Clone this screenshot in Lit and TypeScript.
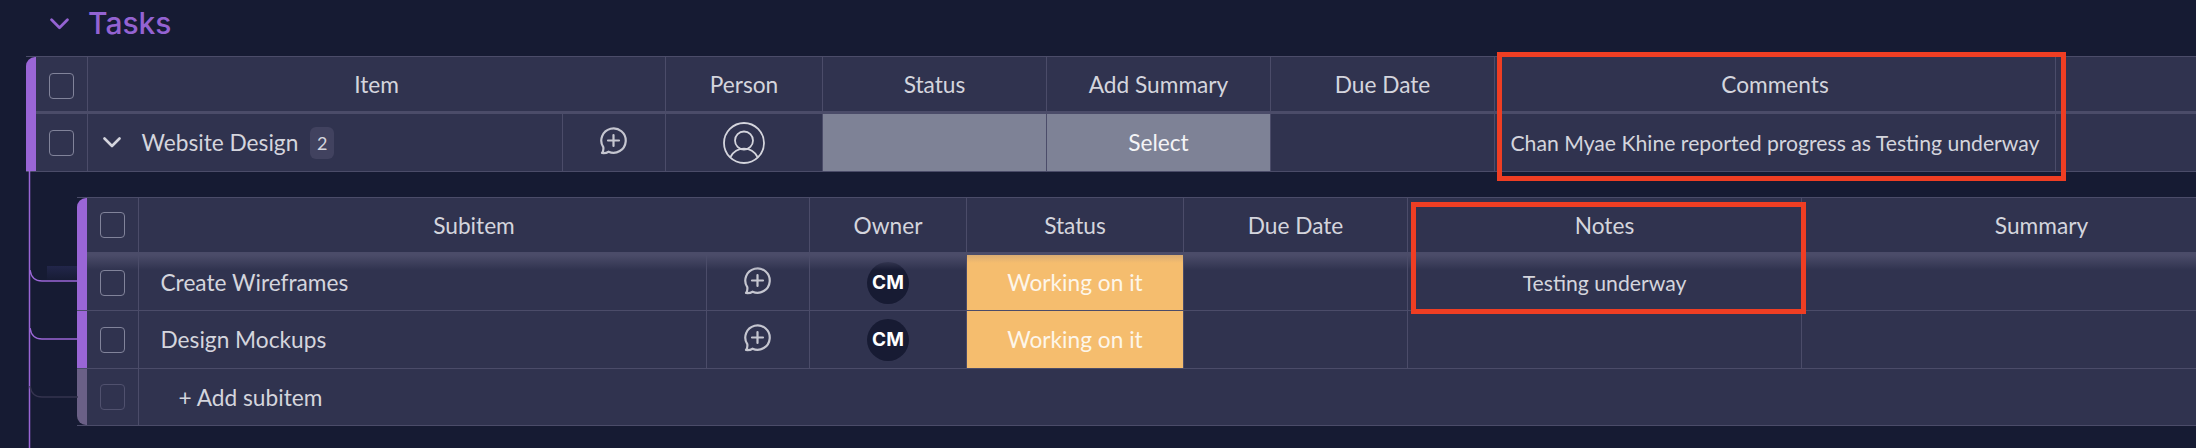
import { LitElement, html, css, svg } from "lit";
import { customElement } from "lit/decorators.js";

const chevron = (cls: string) => html`<svg class=${cls} viewBox="0 0 18 11" fill="none">
    <path d="M1.5 1.5 9 9l7.5-7.5" stroke="currentColor" stroke-width="2.6" stroke-linecap="round" stroke-linejoin="round" />
</svg>`;

const bubble = html`<svg class="bubble" viewBox="0 0 28 28" fill="none" stroke="currentColor" stroke-width="2.2">
    <path d="M3.3 20.2A12.2 12.2 0 1 1 8.6 24.7C7 25.7 4.6 26.3 2 26 3.2 24.5 3.6 22.5 3.3 20.2Z" stroke-linejoin="round" />
    <path d="M13.5 8v11M8 13.5h11" stroke-linecap="round" />
</svg>`;

const person = html`<svg class="person" viewBox="0 0 42 42" fill="none" stroke="currentColor" stroke-width="1.8">
    <circle cx="21" cy="21" r="20" />
    <circle cx="21" cy="18.5" r="9" />
    <path d="M7.5 35c3-5.5 8-8.3 13.5-8.3s10.5 2.8 13.5 8.3" />
</svg>`;

const branch = (y: number, cls: string) =>
    svg`<path class=${cls} d="M4 ${y - 11}c1 7 5 11 12 11H52" />`;

@customElement("app-root")
export class AppRoot extends LitElement {
    static styles = css`
        :host {
            display: block;
            position: relative;
            width: 2196px;
            height: 448px;
            overflow: hidden;
            background: #161b33;
            font-family: "Lato", "Liberation Sans", sans-serif;
            font-size: 22.7px;
            color: #d4d5dd;
        }
        .title {
            display: flex;
            align-items: center;
            box-sizing: border-box;
            height: 48px;
            padding: 0 0 2px 50px;
            gap: 19px;
            color: #9463d2;
            font-family: "Inter", sans-serif;
            font-size: 30px;
            font-weight: 500;
        }
        .title-chevron {
            width: 19px;
            height: 12px;
            margin-top: 2px;
        }
        .parent {
            margin: 8px 0 0 26px;
            width: 2400px;
        }
        .parent .row {
            grid-template-columns: 10px 51px 475px 103px 157px 224px 224px 224px 561px 341px;
        }
        .parent .box {
            margin-right: 1px;
        }
        .parent .head .box {
            margin-top: 3px;
        }
        .sub {
            margin: 25px 0 0 77px;
            width: 2300px;
        }
        .sub .row {
            grid-template-columns: 10px 51px 568px 103px 157px 217px 224px 394px 480px;
        }
        .row {
            display: grid;
            position: relative;
        }
        .head {
            height: 55px;
            border-top: 1px solid #4b4c69;
            box-sizing: border-box;
        }
        .thick {
            height: 3px;
            background: #4b4c69;
        }
        .body {
            height: 58px;
            border-bottom: 1px solid #4b4c69;
            box-sizing: border-box;
        }
        .sub .body.first {
            height: 56px;
        }
        .sub .body.last {
            height: 57px;
        }
        .cell {
            display: flex;
            align-items: center;
            justify-content: center;
            min-width: 0;
            background: #30334f;
            border-left: 1px solid #4b4c69;
            white-space: nowrap;
        }
        .check {
            border-left: 0;
        }
        .span2 {
            grid-column: span 2;
        }
        .rest {
            grid-column: 3 / -1;
        }
        .left {
            justify-content: flex-start;
        }
        .small {
            font-size: 21.2px;
        }
        .name {
            padding-left: 21.5px;
        }
        .toggle {
            padding-left: 14.5px;
            gap: 21px;
        }
        .row-chevron {
            width: 18px;
            height: 11px;
        }
        .count {
            display: flex;
            align-items: center;
            justify-content: center;
            width: 24px;
            height: 32px;
            margin-left: -9px;
            border-radius: 6px;
            background: #41425f;
            font-size: 18px;
        }
        .bar {
            background: #9a66d6;
        }
        .round-top {
            border-top-left-radius: 9px;
        }
        .bar.dim {
            background: #6a6086;
            border-bottom-left-radius: 9px;
        }
        .box {
            width: 25px;
            height: 26px;
            box-sizing: border-box;
            border: 1px solid #81839a;
            border-radius: 4px;
        }
        .box.dim {
            border-color: #50516e;
        }
        .grey {
            background: #7e8296;
            color: #f4f4f6;
        }
        .orange {
            background: #f5bd6e;
            color: #fdf6ea;
        }
        .orange.tinted {
            position: relative;
            z-index: 1;
            background: linear-gradient(#d9ac72, #f5bd6e 8px);
        }
        .bubble {
            width: 28px;
            height: 28px;
            margin-bottom: 3px;
            color: #c5c6d0;
        }
        .person {
            width: 42px;
            height: 42px;
            color: #d4d5dd;
        }
        .avatar {
            display: flex;
            align-items: center;
            justify-content: center;
            width: 42px;
            height: 42px;
            border-radius: 50%;
            background: #171b33;
            color: #fff;
            font-family: "Inter", sans-serif;
            font-size: 19px;
            font-weight: 700;
        }
        .add {
            padding-left: 39.5px;
        }
        .fade {
            position: absolute;
            left: 10px;
            right: 0;
            top: 0;
            height: 15px;
            background: linear-gradient(#4b4c69, rgba(75, 76, 105, 0));
            pointer-events: none;
        }
        .haze {
            position: absolute;
            left: 47px;
            top: 266px;
            width: 30px;
            height: 15px;
            background: linear-gradient(#22264a, rgba(34, 38, 74, 0));
        }
        .tree {
            position: absolute;
            left: 26px;
            top: 171px;
            width: 52px;
            height: 277px;
            fill: none;
            stroke: #9a66d6;
            stroke-width: 1.5;
        }
        .tree .dim {
            stroke: #35344f;
        }
        .mark {
            position: absolute;
            box-sizing: border-box;
            border: 5px solid #ef3e23;
            pointer-events: none;
        }
        .comments {
            left: 1497px;
            top: 52px;
            width: 569px;
            height: 129px;
        }
        .notes {
            left: 1411px;
            top: 202px;
            width: 395px;
            height: 112px;
        }
    `;

    render() {
        return html`
            <div class="title">${chevron("title-chevron")}<span>Tasks</span></div>
            <div class="parent">
                <div class="row head">
                    <div class="bar round-top"></div>
                    <div class="cell check"><div class="box"></div></div>
                    <div class="cell span2">Item</div>
                    <div class="cell">Person</div>
                    <div class="cell">Status</div>
                    <div class="cell">Add Summary</div>
                    <div class="cell">Due Date</div>
                    <div class="cell">Comments</div>
                    <div class="cell"></div>
                </div>
                <div class="row thick"><div class="bar"></div></div>
                <div class="row body">
                    <div class="bar"></div>
                    <div class="cell check"><div class="box"></div></div>
                    <div class="cell left toggle">
                        ${chevron("row-chevron")}<span>Website Design</span><span class="count">2</span>
                    </div>
                    <div class="cell">${bubble}</div>
                    <div class="cell">${person}</div>
                    <div class="cell grey"></div>
                    <div class="cell grey">Select</div>
                    <div class="cell"></div>
                    <div class="cell small">Chan Myae Khine reported progress as Testing underway</div>
                    <div class="cell"></div>
                </div>
            </div>
            <div class="sub">
                <div class="row head">
                    <div class="bar round-top"></div>
                    <div class="cell check"><div class="box"></div></div>
                    <div class="cell span2">Subitem</div>
                    <div class="cell">Owner</div>
                    <div class="cell">Status</div>
                    <div class="cell">Due Date</div>
                    <div class="cell">Notes</div>
                    <div class="cell">Summary</div>
                </div>
                <div class="row thick"><div class="bar"></div></div>
                ${this.subRow("Create Wireframes", "Testing underway", true)}
                ${this.subRow("Design Mockups", "", false)}
                <div class="row body last">
                    <div class="bar dim"></div>
                    <div class="cell check"><div class="box dim"></div></div>
                    <div class="cell left add rest">+ Add subitem</div>
                </div>
            </div>
            <div class="haze"></div>
            <svg class="tree" viewBox="0 0 52 277">
                <path d="M3.5 0V277" />
                ${branch(110, "")} ${branch(168, "")} ${branch(226, "dim")}
            </svg>
            <div class="mark comments"></div>
            <div class="mark notes"></div>
        `;
    }

    subRow(name: string, note: string, first: boolean) {
        return html`<div class="row body ${first ? "first" : ""}">
            <div class="bar"></div>
            <div class="cell check"><div class="box"></div></div>
            <div class="cell left name">${name}</div>
            <div class="cell">${bubble}</div>
            <div class="cell"><div class="avatar">CM</div></div>
            <div class="cell orange ${first ? "tinted" : ""}">Working on it</div>
            <div class="cell"></div>
            <div class="cell small">${note}</div>
            <div class="cell"></div>
            ${first ? html`<div class="fade"></div>` : ""}
        </div>`;
    }
}
